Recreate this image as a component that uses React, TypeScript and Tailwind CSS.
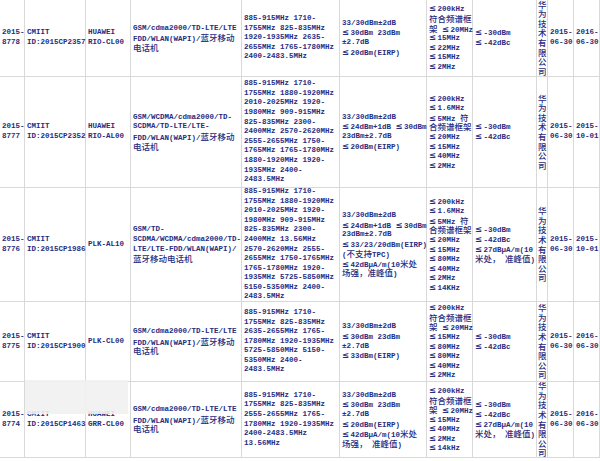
import React from "react";

type Row = string[][];

const rows: Row[] = [
  [
    ["2015-", "8778"],
    ["CMIIT", "ID:2015CP2357"],
    ["HUAWEI", "RIO-CL00"],
    ["GSM/cdma2000/TD-LTE/LTE", "FDD/WLAN(WAPI)/蓝牙移动", "电话机"],
    ["885-915MHz 1710-", "1755MHz 825-835MHz", "1920-1935MHz 2635-", "2655MHz 1765-1780MHz", "2400-2483.5MHz"],
    ["33/30dBm±2dB", "≤30dBm 23dBm", "±2.7dB", "≤20dBm(EIRP)"],
    ["≤200kHz", "符合频谱框", "架 ≤20MHz", "≤15MHz", "≤22MHz", "≤15MHz", "≤2MHz"],
    ["≤-30dBm", "≤-42dBc"],
    ["华", "为", "技", "术", "有", "限", "公", "司"],
    ["2015-", "06-30"],
    ["2016-", "06-30"],
  ],
  [
    ["2015-", "8777"],
    ["CMIIT", "ID:2015CP2352"],
    ["HUAWEI", "RIO-AL00"],
    ["GSM/WCDMA/cdma2000/TD-", "SCDMA/TD-LTE/LTE-", "FDD/WLAN(WAPI)/蓝牙移动", "电话机"],
    [
      "885-915MHz 1710-",
      "1755MHz 1880-1920MHz",
      "2010-2025MHz 1920-",
      "1980MHz 909-915MHz",
      "825-835MHz 2300-",
      "2400MHz 2570-2620MHz",
      "2555-2655MHz 1750-",
      "1765MHz 1765-1780MHz",
      "1880-1920MHz 1920-",
      "1935MHz 2400-",
      "2483.5MHz",
    ],
    ["33/30dBm±2dB", "≤24dBm+1dB ≤30dBm", "23dBm±2.7dB", "≤20dBm(EIRP)"],
    ["≤200kHz", "≤1.6MHz", "≤5MHz 符", "合频谱框架", "≤20MHz", "≤15MHz", "≤40MHz", "≤2MHz"],
    ["≤-30dBm", "≤-42dBc"],
    ["华", "为", "技", "术", "有", "限", "公", "司"],
    ["2015-", "06-30"],
    ["2015-", "10-01"],
  ],
  [
    ["2015-", "8776"],
    ["CMIIT", "ID:2015CP1986"],
    ["PLK-AL10"],
    ["GSM/TD-", "SCDMA/WCDMA/cdma2000/TD-", "LTE/LTE-FDD/WLAN(WAPI)/", "蓝牙移动电话机"],
    [
      "885-915MHz 1710-",
      "1755MHz 1880-1920MHz",
      "2010-2025MHz 1920-",
      "1980MHz 909-915MHz",
      "825-835MHz 2300-",
      "2400MHz 13.56MHz",
      "2570-2620MHz 2555-",
      "2655MHz 1750-1765MHz",
      "1765-1780MHz 1920-",
      "1935MHz 5725-5850MHz",
      "5150-5350MHz 2400-",
      "2483.5MHz",
    ],
    [
      "33/30dBm±2dB",
      "≤24dBm+1dB ≤30dBm",
      "23dBm±2.7dB",
      "≤33/23/20dBm(EIRP)",
      "(不支持TPC)",
      "≤42dBμA/m(10米处",
      "场强，准峰值)",
    ],
    ["≤200kHz", "≤1.6MHz", "≤5MHz 符", "合频谱框架", "≤20MHz", "≤15MHz", "≤80MHz", "≤40MHz", "≤2MHz", "≤14KHz"],
    ["≤-30dBm", "≤-42dBc", "≤27dBμA/m(10", "米处， 准峰值)"],
    ["华", "为", "技", "术", "有", "限", "公", "司"],
    ["2015-", "06-30"],
    ["2015-", "10-01"],
  ],
  [
    ["2015-", "8775"],
    ["CMIIT", "ID:2015CP1900"],
    ["PLK-CL00"],
    ["GSM/cdma2000/TD-LTE/LTE", "FDD/WLAN(WAPI)/蓝牙移动", "电话机"],
    [
      "885-915MHz 1710-",
      "1755MHz 825-835MHz",
      "2635-2655MHz 1765-",
      "1780MHz 1920-1935MHz",
      "5725-5850MHz 5150-",
      "5350MHz 2400-",
      "2483.5MHz",
    ],
    ["33/30dBm±2dB", "≤30dBm 23dBm", "±2.7dB", "≤33dBm(EIRP)"],
    ["≤200kHz", "符合频谱框", "架 ≤20MHz", "≤15MHz", "≤80MHz", "≤80MHz", "≤40MHz", "≤2MHz"],
    ["≤-30dBm", "≤-42dBc"],
    ["华", "为", "技", "术", "有", "限", "公", "司"],
    ["2015-", "06-30"],
    ["2016-", "06-30"],
  ],
  [
    ["2015-", "8774"],
    ["CMIIT", "ID:2015CP1463"],
    ["HUAWEI", "GRR-CL00"],
    ["GSM/cdma2000/TD-LTE/LTE", "FDD/WLAN(WAPI)/蓝牙移动", "电话机"],
    [
      "885-915MHz 1710-",
      "1755MHz 825-835MHz",
      "2555-2655MHz 1765-",
      "1780MHz 1920-1935MHz",
      "2400-2483.5MHz",
      "13.56MHz",
    ],
    ["33/30dBm±2dB", "≤30dBm 23dBm", "±2.7dB", "≤20dBm(EIRP)", "≤42dBμA/m(10米处", "场强， 准峰值)"],
    ["≤200kHz", "符合频谱框", "架 ≤20MHz", "≤15MHz", "≤40MHz", "≤2MHz", "≤14kHz"],
    ["≤-30dBm", "≤-42dBc", "≤27dBμA/m(10", "米处， 准峰值)"],
    ["华", "为", "技", "术", "有", "限", "公", "司"],
    ["2015-", "06-30"],
    ["2016-", "06-30"],
  ],
];

const isCJK = (s: string) => /[\u3000-\u303f\u4e00-\u9fff\uff00-\uffef]/.test(s);

function Line({ text }: { text: string }) {
  const parts = text.split(/(≤|[\u3000-\u303f\u4e00-\u9fff\uff00-\uffef]+)/).filter(Boolean);
  return (
    <div className="h-[9.6px] leading-[9.6px] whitespace-nowrap">
      {parts.map((p, i) =>
        p === "≤" ? (
          <span
            key={i}
            className="inline-block w-[8.5px] text-[8.5px] font-bold font-['DejaVu_Sans',sans-serif]"
          >
            ≤
          </span>
        ) : isCJK(p) ? (
          <span key={i} className="text-[8.5px] font-medium font-['Noto_Sans_CJK_SC',sans-serif]">
            {p}
          </span>
        ) : (
          <span key={i}>{p}</span>
        )
      )}
    </div>
  );
}

export default function App() {
  return (
    <div className="relative w-[600px] h-[461px] overflow-hidden bg-white text-[#282d80] text-[7.5px] font-bold font-['Liberation_Mono',monospace]">
      <div className="grid grid-cols-[25px_61px_45px_111px_98px_87px_46px_64px_11px_26px_26px] grid-rows-[77px_111px_114px_80px_76px]">
        {rows.map((row, ri) =>
          row.map((cell, ci) => (
            <div
              key={`${ri}-${ci}`}
              className={`flex items-center border-b border-r border-[#d9d9d9] ${ci === 8 ? "pl-[1px]" : "pl-[2px]"}`}
            >
              <div>
                {cell.map((t, li) => (
                  <Line key={li} text={t} />
                ))}
              </div>
            </div>
          ))
        )}
      </div>
      <div className="absolute left-[25px] top-[380px] w-[103px] h-[34px] bg-[#f1f1f1]/90" />
    </div>
  );
}
